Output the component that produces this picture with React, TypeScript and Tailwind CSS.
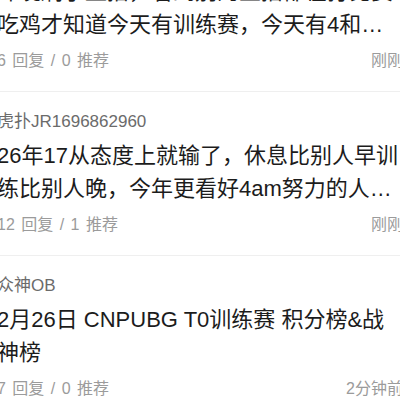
const posts = [
  {
    user: "虎扑JR2210537718",
    title: "昨晚刷了直播，看到别的主播都在打比赛吃鸡才知道今天有训练赛，今天有4和…",
    replies: 6,
    likes: 0,
    time: "刚刚",
  },
  {
    user: "虎扑JR1696862960",
    title: "26年17从态度上就输了，休息比别人早训练比别人晚，今年更看好4am努力的人…",
    replies: 12,
    likes: 1,
    time: "刚刚",
  },
  {
    user: "众神OB",
    title: "2月26日 CNPUBG T0训练赛 积分榜&战神榜",
    replies: 7,
    likes: 0,
    time: "2分钟前",
  },
];

export default function App() {
  return (
    <div
      className="h-[400px] w-[400px] overflow-hidden bg-white"
      style={{ fontFamily: '"Liberation Sans", "Noto Sans CJK SC", sans-serif' }}
    >
      <ul className="-ml-[3px] -mt-[72px] w-[406px]">
        {posts.map((p, i) => (
          <li key={i} className="border-b border-[#efefef] pt-[19px] pb-[19px]">
            <p className="text-[17px] leading-[22px] text-[#6b6b6b]">{p.user}</p>
            <h3 className="mt-[6px] text-[22px] leading-[33px] text-[#1c1c1c]">{p.title}</h3>
            <div className="mt-[9px] flex items-center justify-between text-[16px] leading-[22px] text-[#9b9b9b]">
              <span className="[word-spacing:2px]">
                {p.replies} 回复 / {p.likes} 推荐
              </span>
              <span>{p.time}</span>
            </div>
          </li>
        ))}
      </ul>
    </div>
  );
}
